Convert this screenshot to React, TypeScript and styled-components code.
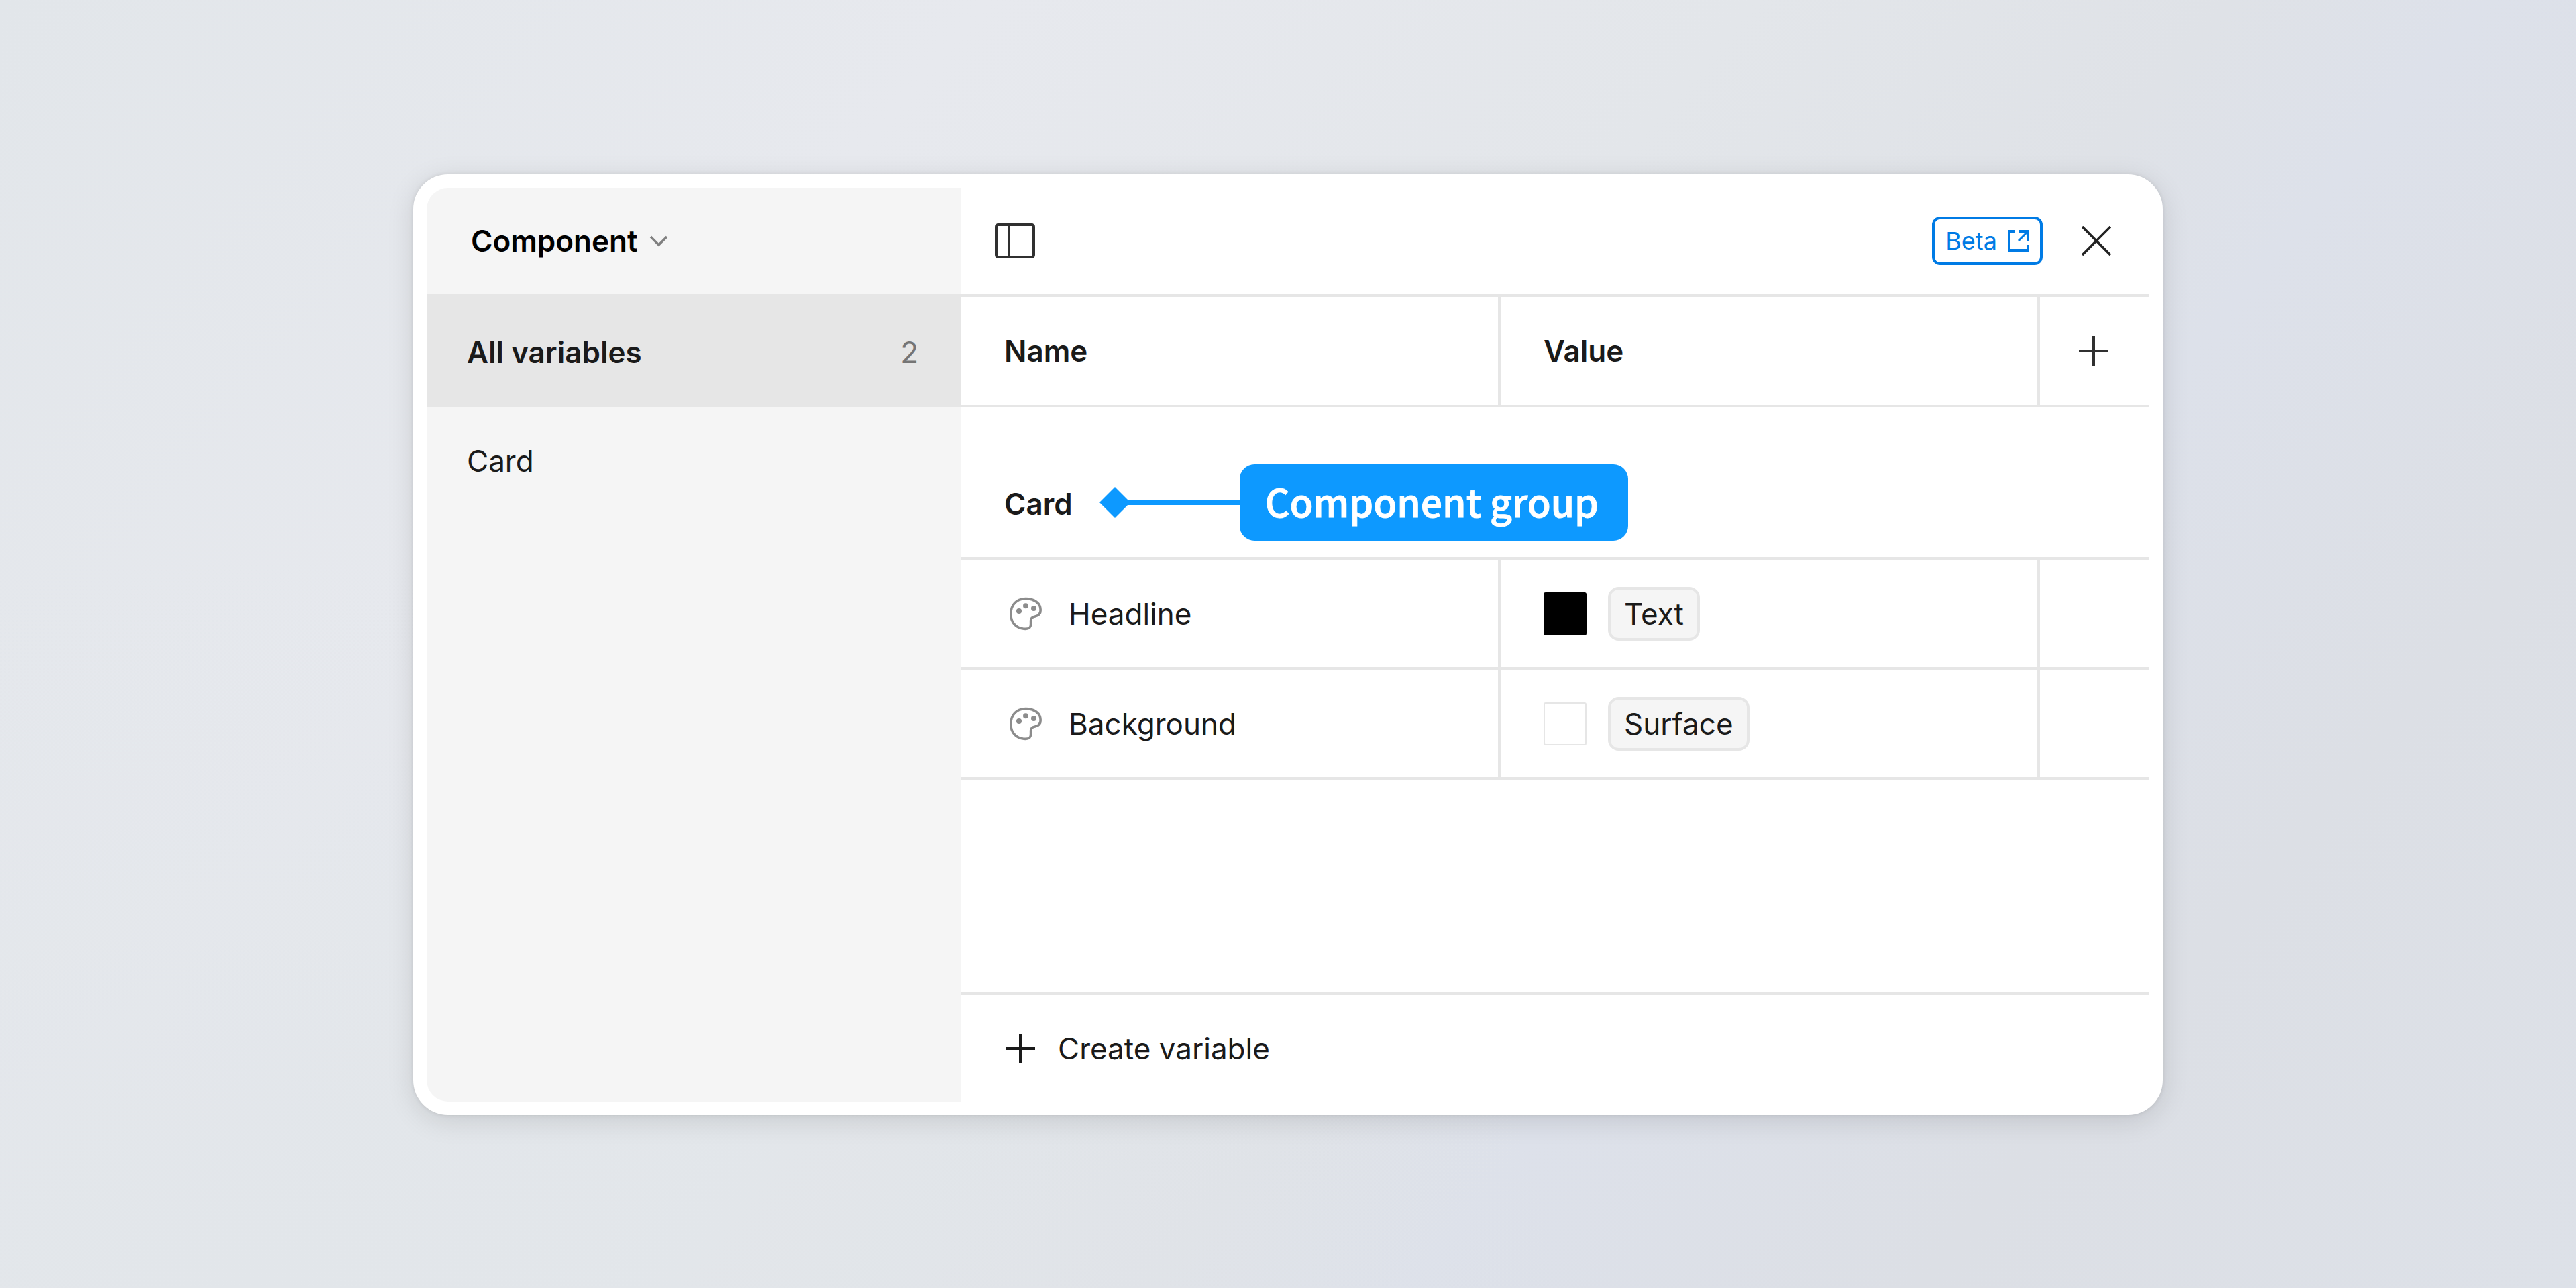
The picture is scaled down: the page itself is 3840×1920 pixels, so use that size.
import React from "react";
import styled, { createGlobalStyle } from "styled-components";

const line = "#e6e6e6";
const ink = "#1a1a1a";
const blue = "#0d99ff";

const GlobalStyle = createGlobalStyle`
  *, *::before, *::after { box-sizing: border-box; }
  body {
    margin: 0;
    font-family: Inter, "Liberation Sans", sans-serif;
    font-size: 44px;
    line-height: 64px;
    color: ${ink};
  }
  button { font: inherit; color: inherit; }
`;

const Backdrop = styled.main`
  min-height: 100vh;
  padding: 42px 40px 40px;
  display: flex;
  align-items: center;
  justify-content: center;
  background:
    radial-gradient(ellipse at 10% 100%, #e2e6ea 0%, rgba(226, 230, 234, 0) 40%),
    linear-gradient(
      130deg,
      #e2e6ea 0%,
      #e7e9ee 27%,
      #e3e6ea 48%,
      #dfe2e7 61%,
      #dde1ea 68%,
      #dcdfe5 82%,
      #dde1e8 100%
    );
`;

const Panel = styled.section`
  flex: 0 1 2608px;
  display: grid;
  grid-template-columns: minmax(0, 797fr) minmax(0, 1771fr);
  border: 20px solid #fff;
  border-radius: 52px;
  background: #fff;
  box-shadow: 0 8px 40px rgba(0, 0, 0, 0.12), 0 0 6px rgba(0, 0, 0, 0.1);
`;

const Sidebar = styled.aside`
  background: #f5f5f5;
  border-radius: 32px 0 0 32px;
`;

const PlainButton = styled.button`
  border: 0;
  padding: 0;
  background: none;
  display: flex;
  align-items: center;
  text-align: left;
  cursor: pointer;
`;

const CollectionButton = styled(PlainButton)`
  width: 100%;
  height: 159px;
  padding: 0 66px 1px;
  gap: 18px;
  font-weight: 600;
  color: #000;
`;

const GroupButton = styled(PlainButton)<{ $selected?: boolean }>`
  width: 100%;
  height: ${(p) => (p.$selected ? 168 : 160)}px;
  padding: ${(p) => (p.$selected ? 4 : 0)}px 64px 0 60px;
  justify-content: space-between;
  background: ${(p) => (p.$selected ? line : "transparent")};
  font-weight: ${(p) => (p.$selected ? 600 : 400)};
`;

const Count = styled.span`
  font-weight: 400;
  color: #757575;
`;

const Content = styled.div`
  display: flex;
  flex-direction: column;
`;

const Toolbar = styled.header`
  height: 163px;
  padding: 0 47px 1px 48px;
  display: flex;
  align-items: center;
  gap: 48px;
  border-bottom: 4px solid ${line};
`;

const IconButton = styled(PlainButton)`
  width: 64px;
  height: 64px;
  justify-content: center;
`;

const BetaLink = styled.a`
  height: 72px;
  margin-left: auto;
  padding: 0 16px;
  display: flex;
  align-items: center;
  gap: 16px;
  border: 4px solid #007be5;
  border-radius: 12px;
  font-size: 36px;
  color: #007be5;
  text-decoration: none;
`;

const VariableTable = styled.table`
  width: 100%;
  margin-bottom: 316px;
  table-layout: fixed;
  border-collapse: separate;
  border-spacing: 0;
  text-align: left;
`;

const ActionColumn = styled.col`
  width: 163px;
`;

const cell = `
  height: 164px;
  padding: 0 0 0 64px;
  border-bottom: 4px solid ${line};
  &:not(:last-child) { border-right: 4px solid ${line}; }
`;

const HeadCell = styled.th`
  ${cell}
  font-weight: 600;
`;

const ActionHeadCell = styled(HeadCell)`
  padding-left: 48px;
`;

const Cell = styled.td`
  ${cell}
`;

const GroupCell = styled.th`
  padding: 64px 0 0 64px;
  border-bottom: 4px solid ${line};
  font-weight: 600;
`;

const GroupRow = styled.div`
  height: 160px;
  display: flex;
  align-items: center;
  gap: 40px;
`;

const Callout = styled.div`
  display: flex;
  align-items: center;
  margin-bottom: 4px;
`;

const CalloutLine = styled.span`
  width: 167px;
  height: 8px;
  margin-left: -4px;
  background: ${blue};
`;

const CalloutLabel = styled.span`
  height: 114px;
  padding: 0 44px 0 38px;
  border-radius: 22px;
  background: ${blue};
  color: #fff;
  font-family: "Noto Sans CJK SC", "Noto Sans", sans-serif;
  font-size: 57px;
  font-weight: 500;
  line-height: 108px;
  white-space: nowrap;
  -webkit-text-stroke: 1px #fff;
`;

const VariableName = styled.div`
  display: flex;
  align-items: center;
  gap: 32px;
`;

const ValueField = styled.div`
  display: flex;
  align-items: center;
  gap: 32px;
`;

const Swatch = styled.span<{ $color: string; $outline: string }>`
  width: 64px;
  height: 64px;
  border: 2px solid ${(p) => p.$outline};
  border-radius: 3px;
  background: ${(p) => p.$color};
`;

const Chip = styled.button`
  height: 80px;
  padding: 0 20px;
  border: 4px solid ${line};
  border-radius: 16px;
  background: #f5f5f5;
`;

const Footer = styled.footer`
  height: 163px;
  padding-left: 64px;
  display: flex;
  align-items: center;
  border-top: 4px solid ${line};
`;

const CreateButton = styled(PlainButton)`
  gap: 32px;
`;

const ChevronIcon = () => (
  <svg width="28" height="18" viewBox="0 0 28 18" fill="none" aria-hidden="true">
    <path d="M2 3 14 15 26 3" stroke="#808080" strokeWidth="3.4" />
  </svg>
);

const SidebarIcon = () => (
  <svg width="60" height="52" viewBox="0 0 60 52" fill="none" aria-hidden="true">
    <rect x="2" y="2" width="56" height="48" rx="3" stroke="#303030" strokeWidth="4" />
    <path d="M21 4V48" stroke="#303030" strokeWidth="4" />
  </svg>
);

const CloseIcon = () => (
  <svg width="44" height="44" viewBox="0 0 44 44" fill="none" aria-hidden="true">
    <path d="M1 1 43 43M43 1 1 43" stroke="#222" strokeWidth="3.6" />
  </svg>
);

const PlusIcon = ({ color }: { color: string }) => (
  <svg width="48" height="44" viewBox="-2 0 48 44" fill="none" aria-hidden="true">
    <path d="M22 0V44M0 22H44" stroke={color} strokeWidth="4" />
  </svg>
);

const ExternalIcon = () => (
  <svg width="32" height="32" viewBox="0 0 32 32" fill="none" aria-hidden="true">
    <path d="M10 2H2V30H30V22M16 2H30V16" stroke="#007be5" strokeWidth="4" />
    <path d="M30 2 16 16" stroke="#007be5" strokeWidth="3" />
  </svg>
);

const PaletteIcon = () => (
  <svg width="64" height="56" viewBox="-8 -4 64 56" fill="none" aria-hidden="true">
    <path
      d="M24 1.6C37 1.6 46.2 8.5 46.2 18.5C46.2 24.5 42.5 27.2 38 28C34 28.7 31.6 30.2 31.6 34V39C31.6 44 29.5 46.4 23.5 46.4C10.5 46.4 1.8 37.5 1.8 24.5C1.8 10.5 10.5 1.6 24 1.6Z"
      stroke="#8c8c8c"
      strokeWidth="3.6"
    />
    <g fill="#8c8c8c">
      <circle cx="24" cy="12.2" r="4" />
      <circle cx="14" cy="20" r="4" />
      <circle cx="36" cy="16" r="4" />
    </g>
  </svg>
);

const DiamondMarker = () => (
  <svg width="46" height="46" viewBox="0 0 46 46" aria-hidden="true">
    <path d="M23 0 46 23 23 46 0 23Z" fill={blue} />
  </svg>
);

const variables = [
  { name: "Headline", value: "Text", color: "#000", outline: "#000" },
  { name: "Background", value: "Surface", color: "#fff", outline: line },
];

export default function App() {
  return (
    <>
      <GlobalStyle />
      <Backdrop>
        <Panel aria-label="Variables">
          <Sidebar>
            <CollectionButton type="button" aria-haspopup="menu">
              Component
              <ChevronIcon />
            </CollectionButton>
            <nav aria-label="Groups">
              <GroupButton type="button" $selected>
                All variables <Count>{variables.length}</Count>
              </GroupButton>
              <GroupButton type="button">Card</GroupButton>
            </nav>
          </Sidebar>
          <Content>
            <Toolbar>
              <IconButton type="button" aria-label="Toggle sidebar">
                <SidebarIcon />
              </IconButton>
              <BetaLink href="#beta">
                Beta
                <ExternalIcon />
              </BetaLink>
              <IconButton type="button" aria-label="Close">
                <CloseIcon />
              </IconButton>
            </Toolbar>
            <VariableTable>
              <colgroup>
                <col />
                <col />
                <ActionColumn />
              </colgroup>
              <thead>
                <tr>
                  <HeadCell scope="col">Name</HeadCell>
                  <HeadCell scope="col">Value</HeadCell>
                  <ActionHeadCell>
                    <IconButton type="button" aria-label="Add mode">
                      <PlusIcon color="#303030" />
                    </IconButton>
                  </ActionHeadCell>
                </tr>
              </thead>
              <tbody>
                <tr>
                  <GroupCell colSpan={3} scope="colgroup">
                    <GroupRow>
                      Card
                      <Callout>
                        <DiamondMarker />
                        <CalloutLine />
                        <CalloutLabel>Component group</CalloutLabel>
                      </Callout>
                    </GroupRow>
                  </GroupCell>
                </tr>
                {variables.map((v) => (
                  <tr key={v.name}>
                    <Cell>
                      <VariableName>
                        <PaletteIcon />
                        {v.name}
                      </VariableName>
                    </Cell>
                    <Cell>
                      <ValueField>
                        <Swatch $color={v.color} $outline={v.outline} />
                        <Chip type="button">{v.value}</Chip>
                      </ValueField>
                    </Cell>
                    <Cell />
                  </tr>
                ))}
              </tbody>
            </VariableTable>
            <Footer>
              <CreateButton type="button">
                <PlusIcon color={ink} />
                Create variable
              </CreateButton>
            </Footer>
          </Content>
        </Panel>
      </Backdrop>
    </>
  );
}
